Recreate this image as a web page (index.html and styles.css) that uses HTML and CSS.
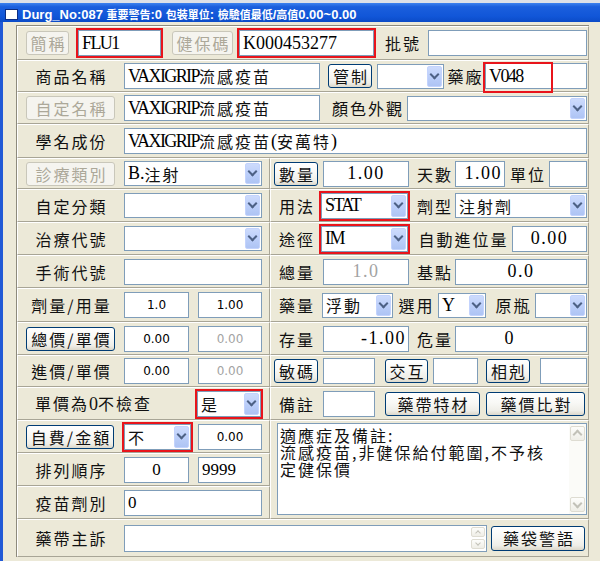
FILE: index.html
```html
<!DOCTYPE html>
<html lang="zh-Hant">
<head>
<meta charset="utf-8">
<title>Durg_No:087</title>
<link rel="stylesheet" href="styles.css">
</head>
<body>
<div class="topstrip"></div>
<div class="titlebar">
  <svg class="ticon" width="13" height="11" viewBox="0 0 13 11"><rect x="0.5" y="0.5" width="12" height="10" fill="#fff" stroke="#0c2d84"/></svg>
  <span class="ttext">Durg_No:087 <span class="tc">重要警告</span>:0 <span class="tc">包裝單位</span>: <span class="tc">檢驗值最低</span>/<span class="tc">高值</span>0.00~0.00</span>
</div>
<div class="frame">
  <div class="form">
    <div class="row h34">
      <div class="btn dis w43">簡稱</div>
      <div class="in hl ml9 w83"><span class="m mt">FLU1</span></div>
      <div class="btn dis ml11 w61">健保碼</div>
      <div class="in hl ml6 w135"><span class="m">K000453277</span></div>
      <div class="lbl ml2 w52">批號</div>
      <div class="in w159"></div>
    </div>
    <div class="row h32">
      <div class="lbl w89">商品名稱</div>
      <div class="in ml9 w196"><span class="m mt">VAXIGRIP</span><span class="cj">流感疫苗</span></div>
      <div class="btn ml8 w44">管制</div>
      <div class="sel ml5 w67"><span class="dd"></span></div>
      <div class="lbl w41">藥廠</div>
      <div class="in w102 mark"><span class="m mt">V048</span><span class="hlbox"></span></div>
    </div>
    <div class="row h32">
      <div class="btn dis w89">自定名稱</div>
      <div class="in ml9 w196"><span class="m mt">VAXIGRIP</span><span class="cj">流感疫苗</span></div>
      <div class="lbl lr w87">顏色外觀</div>
      <div class="sel w180"><span class="dd"></span></div>
    </div>
    <div class="row h34">
      <div class="lbl w89">學名成份</div>
      <div class="in ml9 w463"><span class="m mt">VAXIGRIP</span><span class="cj">流感疫苗</span><span class="m">(</span><span class="cj">安萬特</span><span class="m">)</span></div>
    </div>

    <div class="cols">
      <div class="col lc">
        <div class="row h31">
          <div class="btn dis w89">診療類別</div>
          <div class="sel ml9 w138"><span class="m">B.</span><span class="cj">注射</span><span class="dd"></span></div>
        </div>
        <div class="row h33">
          <div class="lbl w89">自定分類</div>
          <div class="sel ml9 w138"><span class="dd"></span></div>
        </div>
        <div class="row h33">
          <div class="lbl w89">治療代號</div>
          <div class="sel ml9 w138"><span class="dd"></span></div>
        </div>
        <div class="row h33">
          <div class="lbl w89">手術代號</div>
          <div class="in ml9 w138"></div>
        </div>
        <div class="row h34">
          <div class="lbl w89">劑量/用量</div>
          <div class="in c ml9 w65"><span class="s">1.0</span></div>
          <div class="in c ml9 w64"><span class="s">1.00</span></div>
        </div>
        <div class="row h33">
          <div class="btn w89">總價/單價</div>
          <div class="in c ml9 w65"><span class="s">0.00</span></div>
          <div class="in c ml9 w64 gray"><span class="s">0.00</span></div>
        </div>
        <div class="row h32">
          <div class="lbl w89">進價/單價</div>
          <div class="in c ml9 w65"><span class="s">0.00</span></div>
          <div class="in c ml9 w64 gray"><span class="s">0.00</span></div>
        </div>
        <div class="row h33">
          <div class="lbl ll w171">單價為<span class="m">0</span>不檢查</div>
          <div class="sel hl w64"><span class="cj">是</span><span class="dd"></span></div>
        </div>
        <div class="row h33">
          <div class="btn w88">自費/金額</div>
          <div class="sel hl ml10 w67"><span class="cj">不</span><span class="dd"></span></div>
          <div class="in c ml7 w64"><span class="s">0.00</span></div>
        </div>
        <div class="row h33">
          <div class="lbl w89">排列順序</div>
          <div class="in c ml9 w65"><span class="m16">0</span></div>
          <div class="in ml9 w64"><span class="m16">9999</span></div>
        </div>
        <div class="row h33">
          <div class="lbl w89">疫苗劑別</div>
          <div class="in ml9 w138"><span class="m16">0</span></div>
        </div>
      </div>

      <div class="col rc">
        <div class="row h31">
          <div class="btn w44">數量</div>
          <div class="in c ml5 w86"><span class="m mn">1.00</span></div>
          <div class="lbl ml4 w42">天數</div>
          <div class="in r w50"><span class="m mn">1.00</span></div>
          <div class="lbl w44">單位</div>
          <div class="in w38"></div>
        </div>
        <div class="row h33">
          <div class="lbl w44">用法</div>
          <div class="sel hl ml3 w87"><span class="m mt">STAT</span><span class="dd"></span></div>
          <div class="lbl ml5 w42">劑型</div>
          <div class="sel w132"><span class="cj">注射劑</span><span class="dd"></span></div>
        </div>
        <div class="row h33">
          <div class="lbl w44">途徑</div>
          <div class="sel hl ml3 w87"><span class="m mt">IM</span><span class="dd"></span></div>
          <div class="lbl ml5 w99">自動進位量</div>
          <div class="in c w75"><span class="m mn">0.00</span></div>
        </div>
        <div class="row h33">
          <div class="lbl w44">總量</div>
          <div class="in c ml5 w86 gray"><span class="m mn">1.0</span></div>
          <div class="lbl ml4 w42">基點</div>
          <div class="in c w132"><span class="m mn">0.0</span></div>
        </div>
        <div class="row h34">
          <div class="lbl w44">藥量</div>
          <div class="sel ml4 w71"><span class="cj">浮動</span><span class="dd"></span></div>
          <div class="lbl w45">選用</div>
          <div class="sel w48"><span class="m">Y</span><span class="dd"></span></div>
          <div class="lbl pl4 w49">原瓶</div>
          <div class="sel w52"><span class="dd"></span></div>
        </div>
        <div class="row h33">
          <div class="lbl w44">存量</div>
          <div class="in r ml5 w86"><span class="m mn">-1.00</span></div>
          <div class="lbl ml4 w42">危量</div>
          <div class="in c off w132"><span class="m">0</span></div>
        </div>
        <div class="row h32">
          <div class="btn w44">敏碼</div>
          <div class="in ml5 w52"></div>
          <div class="btn ml10 w43">交互</div>
          <div class="in ml5 w45"></div>
          <div class="btn ml8 w44">相剋</div>
          <div class="in ml10 w47"></div>
        </div>
        <div class="row h33">
          <div class="lbl w44">備註</div>
          <div class="in ml5 w52"></div>
          <div class="btn ml10 w95">藥帶特材</div>
          <div class="btn ml6 w99">藥價比對</div>
        </div>
        <div class="row tacell">
          <div class="ta">
            <div class="tatext">適應症及備註:
流感疫苗,非健保給付範圍,不予核
定健保價</div>
            <div class="sb">
              <span class="sbb up"></span>
              <span class="sbb down"></span>
            </div>
          </div>
        </div>
      </div>
    </div>

    <div class="row h38">
      <div class="lbl w89">藥帶主訴</div>
      <div class="in tall ml9 w363">
        <span class="spin">
          <span class="spb up"></span>
          <span class="spb down"></span>
        </span>
      </div>
      <div class="btn tallb ml4 w94">藥袋警語</div>
    </div>
  </div>
</div>
</body>
</html>
```

FILE: styles.css
```css
* { box-sizing: border-box; margin: 0; padding: 0; }
html, body { width: 600px; height: 561px; overflow: hidden; }
body {
  background: #ece9d8;
  font-family: "Noto Sans CJK TC", sans-serif;
  font-size: 16px;
  color: #000;
}

.topstrip { height: 3px; background: #dde1e8; }
.titlebar {
  height: 19px;
  padding: 3px 0 0 5px;
  display: flex;
  align-items: center;
  background: linear-gradient(#3d82ef 0%, #1b5fdd 20%, #1156d8 70%, #0b4bc7 100%);
}
.ticon { display: block; flex: none; }
.ttext {
  margin-left: 4px;
  color: #fff;
  font-weight: bold;
  font-size: 13px;
  line-height: 16px;
  font-family: "Liberation Sans", "Noto Sans CJK TC", sans-serif;
  white-space: nowrap;
}
.tc { font-family: "Noto Sans CJK TC", sans-serif; font-size: 11px; }

.frame {
  height: 539px;
  border-left: 3px solid #2159d6;
  padding: 3px 0 0 13px;
}
.form {
  width: 573px;
  border-left: 1px solid #8d8a7c;
  border-top: 1px solid #8d8a7c;
}
.row {
  display: flex;
  align-items: center;
  padding-left: 8px;
  border-top: 1px solid #fff;
  border-left: 1px solid #fff;
  border-right: 1px solid #a8a596;
  border-bottom: 1px solid #a8a596;
}
.cols { display: grid; grid-template-columns: 253px 319px; }
.col { display: flex; flex-direction: column; }
.rc .row { padding-left: 3px; }
.tacell { height: 99px; align-items: flex-start; padding-top: 2px; }

.h31 { height: 31px; }
.h32 { height: 32px; }
.h33 { height: 33px; }
.h34 { height: 34px; }
.h38 { height: 38px; }

/* labels */
.lbl {
  flex: none;
  font-size: 16px;
  letter-spacing: 2px;
  padding-left: 2px;
  text-align: center;
  white-space: nowrap;
  line-height: 20px;
  color: #111;
}
.lbl.lr { text-align: right; padding-right: 3px; }
.lbl.ll { text-align: left; padding-left: 9px; }
.lbl.pl4 { padding-left: 6px; }

/* buttons */
.btn {
  flex: none;
  height: 24px;
  border: 1px solid #003c74;
  border-radius: 3px;
  background: linear-gradient(#ffffff 0%, #f8f8f5 45%, #efeee8 80%, #dcd8cb 100%);
  display: flex;
  align-items: center;
  justify-content: center;
  padding-left: 2px;
  font-size: 16px;
  letter-spacing: 2px;
  white-space: nowrap;
  color: #111;
}
.btn.dis {
  border-color: #c9c7ba;
  background: #f5f4ef;
  color: #aca899;
}
.btn.tallb { height: 25px; }

/* inputs */
.in {
  flex: none;
  height: 26px;
  border: 1px solid #7f9db9;
  background: #fff;
  display: flex;
  align-items: center;
  padding: 0 3px;
  white-space: nowrap;
  overflow: hidden;
}
.in.c { justify-content: center; }
.in.r { justify-content: flex-end; padding-right: 2px; }
.in.off { padding-right: 27px; }
.in.tall { height: 27px; }
.gray { color: #a3a3a3; }

.hl { outline: 2px solid #e8141b; }
.mark { position: relative; overflow: visible; }
.hlbox {
  position: absolute;
  left: -3px;
  top: -2px;
  width: 70px;
  height: 31px;
  border: 2px solid #e8141b;
}

/* selects */
.sel {
  flex: none;
  height: 25px;
  border: 1px solid #7f9db9;
  background: #fff;
  display: flex;
  align-items: center;
  padding-left: 3px;
  white-space: nowrap;
}
.sel.hl { height: 26px; }
.dd {
  margin-left: auto;
  flex: none;
  width: 15px;
  height: calc(100% - 2px);
  margin-right: 1px;
  border: 1px solid #c3d3fd;
  border-radius: 2px;
  background: linear-gradient(#cddbfc 0%, #bccffa 50%, #aec4f4 100%);
  display: flex;
  align-items: center;
  justify-content: center;
}
.dd::before {
  content: "";
  width: 5px;
  height: 5px;
  border-right: 2px solid #4d6185;
  border-bottom: 2px solid #4d6185;
  transform: translateY(-2px) rotate(45deg);
}

/* fonts */
.m {
  font-family: "Liberation Serif", serif;
  font-size: 18px;
  letter-spacing: 0;
}
.m.mt { letter-spacing: -1.6px; }
.m.mn { letter-spacing: 1.5px; }
.m16 {
  font-family: "Liberation Serif", serif;
  font-size: 17px;
}
.s {
  font-family: "DejaVu Sans", sans-serif;
  font-size: 12px;
}
.cj {
  font-family: "Noto Sans CJK TC", sans-serif;
  font-size: 16px;
  letter-spacing: 2px;
  color: #111;
}

/* textarea */
.ta {
  margin-left: 3px;
  width: 310px;
  height: 92px;
  border: 1px solid #7f9db9;
  background: #fff;
  display: flex;
}
.tatext {
  flex: 1;
  padding: 3px 0 0 2px;
  font-size: 16px;
  letter-spacing: 2px;
  line-height: 17px;
  white-space: pre;
  overflow: hidden;
  color: #111;
}
.sb {
  flex: none;
  width: 17px;
  background: #fbfbf8;
  display: flex;
  flex-direction: column;
  justify-content: space-between;
  padding: 2px 1px 2px 1px;
}
.sbb, .spb {
  display: flex;
  align-items: center;
  justify-content: center;
  border: 1px solid #dedcd2;
  border-radius: 2px;
  background: linear-gradient(#fdfdfb, #efeee7);
}
.sbb { height: 15px; }
.sbb::before, .spb::before {
  content: "";
  width: 5px;
  height: 5px;
  border-right: 2px solid #c2c1b8;
  border-bottom: 2px solid #c2c1b8;
}
.sbb.up::before { transform: translateY(1px) rotate(-135deg); }
.sbb.down::before { transform: translateY(-1px) rotate(45deg); }

.spin {
  margin-left: auto;
  margin-right: -2px;
  display: flex;
  flex-direction: column;
  gap: 2px;
}
.spb { width: 14px; height: 10px; }
.spb::before { width: 3px; height: 3px; border-width: 0 1px 1px 0; }
.spb.up::before { transform: translateY(1px) rotate(-135deg); }
.spb.down::before { transform: translateY(-1px) rotate(45deg); }

/* widths */
.w38 { width: 38px; } .w41 { width: 41px; } .w42 { width: 42px; } .w43 { width: 43px; }
.w44 { width: 44px; } .w45 { width: 45px; } .w47 { width: 47px; } .w48 { width: 48px; }
.w49 { width: 49px; } .w50 { width: 50px; } .w52 { width: 52px; } .w61 { width: 61px; }
.w64 { width: 64px; } .w65 { width: 65px; } .w67 { width: 67px; } .w71 { width: 71px; }
.w75 { width: 75px; } .w83 { width: 83px; } .w86 { width: 86px; } .w87 { width: 87px; }
.w88 { width: 88px; } .w89 { width: 89px; } .w94 { width: 94px; } .w95 { width: 95px; }
.w99 { width: 99px; } .w102 { width: 102px; } .w132 { width: 132px; } .w135 { width: 135px; }
.w138 { width: 138px; } .w159 { width: 159px; } .w171 { width: 171px; } .w180 { width: 180px; }
.w196 { width: 196px; } .w363 { width: 363px; } .w463 { width: 463px; }

/* margins */
.ml2 { margin-left: 2px; } .ml3 { margin-left: 3px; } .ml4 { margin-left: 4px; }
.ml5 { margin-left: 5px; } .ml6 { margin-left: 6px; } .ml7 { margin-left: 7px; }
.ml8 { margin-left: 8px; } .ml9 { margin-left: 9px; } .ml10 { margin-left: 10px; }
.ml11 { margin-left: 11px; }
```
